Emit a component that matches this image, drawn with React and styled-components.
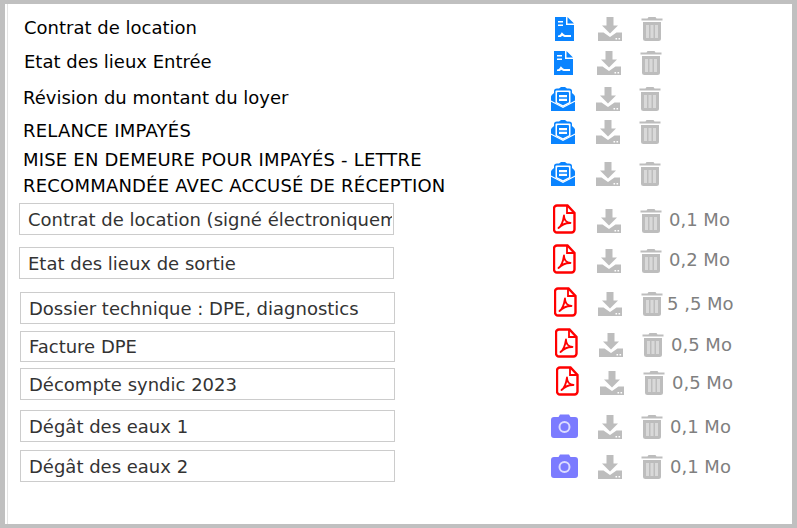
import React from 'react';
import styled, { createGlobalStyle } from 'styled-components';

const GlobalStyle = createGlobalStyle`
  html, body {
    margin: 0;
    padding: 0;
    background: #fff;
  }
`;

const Frame = styled.div`
  box-sizing: border-box;
  width: 797px;
  height: 528px;
  border: solid #c0c0c0;
  border-width: 4px 5px;
  background: #fff;
  box-shadow: inset 2px 0 0 #fff, inset 3px 0 0 #e4e4e4;
  overflow: hidden;
  font-family: "DejaVu Sans", Verdana, sans-serif;
  font-size: 18px;
`;

const List = styled.div`
  display: flex;
  flex-direction: column;
`;

const Row = styled.div`
  display: flex;
  align-items: flex-start;
  height: ${({ $h }) => $h}px;
  margin-top: ${({ $mt }) => $mt}px;
`;

const Title = styled.div`
  flex: 0 0 ${({ $w }) => $w}px;
  margin-left: ${({ $x }) => $x}px;
  margin-top: ${({ $y }) => $y || 0}px;
  color: #000;
  line-height: 26px;
  letter-spacing: ${({ $caps }) => ($caps ? '0.2px' : '0')};
`;

const NameInput = styled.input`
  box-sizing: border-box;
  flex: 0 0 375px;
  width: 375px;
  height: ${({ $h }) => $h || 32}px;
  margin: ${({ $y }) => $y}px 0 0 ${({ $x }) => $x}px;
  padding: 0 1px 0 8px;
  border: 1px solid #cccccc;
  border-radius: 0;
  outline: none;
  background: #fff;
  color: #333;
  font: inherit;
`;

const Slot = styled.span`
  display: block;
  flex: none;
  line-height: 0;
  margin-left: ${({ $x }) => $x}px;
  margin-top: ${({ $y }) => $y}px;
  filter: blur(0.3px);
`;

const Size = styled.span`
  flex: none;
  color: #808080;
  line-height: 20px;
  white-space: pre;
  margin-left: ${({ $x }) => $x}px;
  margin-top: ${({ $y }) => $y}px;
`;

const DocIcon = () => (
  <svg width="19" height="24" viewBox="0 0 19 24">
    <path d="M0 0h11v8h8v16H0z" fill="#0a84ff" />
    <path d="M12.500 0L19 6.500h-6.500z" fill="#0a84ff" />
    <path d="M3 4h5v1.600H3zM3 7.500h5v1.600H3z" fill="#fff" />
    <path d="M3 18.500c2.200 0 2.800-1.200 3.800-3.200l1.700 1.700 1.500.9h6V20H9.500L7 18.800 6 20H3z" fill="#fff" />
  </svg>
);

const MailIcon = () => (
  <svg width="24" height="24" viewBox="0 0 24 24">
    <path
      d="M0 9.500Q0 8 3 6V4Q3 1.500 6 1.500H8L10 0H14L16 1.500H18Q21 1.500 21 4V6Q24 8 24 9.500V24H0z"
      fill="#0a84ff"
    />
    <path d="M4.500 4.500Q4.500 3.500 5.500 3.500h13q1 0 1 1V16L12 20 4.500 16z" fill="#fff" />
    <path d="M6 6q0-1 1-1h10q1 0 1 1v9.200L12 18.300 6 15.200z" fill="#0a84ff" />
    <path d="M8 8h8v2.200H8zM8 11.800h8V14H8z" fill="#fff" />
    <path d="M0 13.500l12 6.300 12-6.300v1.300L12 21 0 14.800z" fill="#fff" />
  </svg>
);

const PdfIcon = () => (
  <svg width="23" height="30" viewBox="0 0 23 30">
    <path
      d="M4 1.500h10.500L21.500 9v16.500a3 3 0 0 1-3 3H4a3 3 0 0 1-3-3v-21a3 3 0 0 1 3-3z"
      fill="#fff"
      stroke="#ff0000"
      strokeWidth="2.400"
    />
    <path d="M14 1.500V9h7.500" fill="none" stroke="#ff0000" strokeWidth="1.800" />
    <path
      d="M5.500 24c2.500-1.500 4.500-6 5.500-12.500 0 4 2 7 6.500 7.500-4-.2-8 1-12 5z"
      fill="none"
      stroke="#ff0000"
      strokeWidth="1.800"
      strokeLinejoin="round"
    />
  </svg>
);

const CameraIcon = () => (
  <svg width="27" height="24" viewBox="0 0 27 24">
    <path
      d="M3 3h4.500L9 .5h9L19.500 3H24a3 3 0 0 1 3 3v15a3 3 0 0 1-3 3H3a3 3 0 0 1-3-3V6a3 3 0 0 1 3-3z"
      fill="#7b7bff"
    />
    <circle cx="13.500" cy="13" r="5" fill="none" stroke="#dcdcff" strokeWidth="2" />
  </svg>
);

const DownloadIcon = () => (
  <svg width="24" height="24" viewBox="0 0 24 24">
    <path d="M8.500 0h7v8.500H20l-8 8-8-8h4.500z" fill="#bdbdbd" />
    <path d="M0 15.500h5.500L12 20l6.500-4.500H24V24H0z" fill="#bdbdbd" />
    <path d="M17.500 21h1.600v1.500h-1.600zM20.500 21h1.600v1.500h-1.600z" fill="#fff" />
  </svg>
);

const TrashIcon = () => (
  <svg width="22" height="24" viewBox="0 0 22 24">
    <path d="M7.500 0h7l1 1.500H21.500V3.500H.5V1.500H6.500z" fill="#bdbdbd" />
    <path d="M2 5h18v16.500A2.500 2.500 0 0 1 17.500 24h-13A2.500 2.500 0 0 1 2 21.500z" fill="#bdbdbd" />
    <path d="M5 8h3v13H5zM9.500 8h3v13h-3zM14 8h3v13h-3z" fill="#d9d9d9" />
  </svg>
);

const plainRows = [
  { mt: 13, h: 24, x: 19, y: -2, w: 512, title: ['Contrat de location'], icon: DocIcon, ix: 19, dx: 24, dy: 0, tx: 19 },
  { mt: 10, h: 24, x: 19, y: -2, w: 511, title: ['Etat des lieux Entrée'], icon: DocIcon, ix: 19, dx: 24, dy: 0, tx: 19 },
  { mt: 12, h: 24, x: 18, y: -2, w: 510, title: ['Révision du montant du loyer'], icon: MailIcon, ix: 18, dx: 21, dy: 0, tx: 19 },
  { mt: 9, h: 24, x: 18, y: -2, w: 510, caps: true, title: ['RELANCE IMPAYÉS'], icon: MailIcon, ix: 18, dx: 21, dy: 0, tx: 19 },
  { mt: 0, h: 59, x: 18, y: 3, w: 510, caps: true, title: ['MISE EN DEMEURE POUR IMPAYÉS - LETTRE', 'RECOMMANDÉE AVEC ACCUSÉ DE RÉCEPTION'], icon: MailIcon, ix: 18, dx: 21, dy: 18, tx: 19 },
];

const fileRows = [
  { mt: 0, h: 32, x: 14, by: 0, name: 'Contrat de location (signé électroniquement)', icon: PdfIcon, ix: 159, iy: 1, dx: 21, dy: 6, tx: 19, size: '0,1 Mo', sx: 7, sy: 7 },
  { mt: 9, h: 35, x: 14, by: 3, name: 'Etat des lieux de sortie', icon: PdfIcon, ix: 159, iy: 0, dx: 21, dy: 5, tx: 19, size: '0,2 Mo', sx: 7, sy: 6 },
  { mt: 8, h: 37, x: 15, by: 5, name: 'Dossier technique : DPE, diagnostics', icon: PdfIcon, ix: 159, iy: 0, dx: 21, dy: 5, tx: 19, size: '5 ,5 Mo', sx: 4, sy: 7 },
  { mt: 4, h: 34, x: 15, by: 3, h2: 31, name: 'Facture DPE', icon: PdfIcon, ix: 160, iy: 0, dx: 21, dy: 5, tx: 19, size: '0,5 Mo', sx: 7, sy: 7 },
  { mt: 4, h: 34, x: 15, by: 2, name: 'Décompte syndic 2023', icon: PdfIcon, ix: 161, iy: 0, dx: 21, dy: 5, tx: 19, size: '0,5 Mo', sx: 7, sy: 7 },
  { mt: 10, h: 32, x: 15, by: 0, name: 'Dégât des eaux 1', icon: CameraIcon, ix: 156, iy: 4, dx: 20, dy: 5, tx: 19, size: '0,1 Mo', sx: 7, sy: 7 },
  { mt: 8, h: 32, x: 15, by: 0, name: 'Dégât des eaux 2', icon: CameraIcon, ix: 156, iy: 4, dx: 20, dy: 5, tx: 19, size: '0,1 Mo', sx: 7, sy: 7 },
];

export default function App() {
  return (
    <>
      <GlobalStyle />
      <Frame>
        <List>
          {plainRows.map((row) => (
            <Row key={row.title[0]} $mt={row.mt} $h={row.h}>
              <Title $x={row.x} $y={row.y} $w={row.w} $caps={row.caps}>
                {row.title.map((line) => (
                  <div key={line}>{line}</div>
                ))}
              </Title>
              <Slot $x={row.ix} $y={row.dy}><row.icon /></Slot>
              <Slot $x={row.dx} $y={row.dy}><DownloadIcon /></Slot>
              <Slot $x={row.tx} $y={row.dy}><TrashIcon /></Slot>
            </Row>
          ))}
          {fileRows.map((row) => (
            <Row key={row.name} $mt={row.mt} $h={row.h}>
              <NameInput readOnly value={row.name} $x={row.x} $y={row.by} $h={row.h2} />
              <Slot $x={row.ix} $y={row.iy}><row.icon /></Slot>
              <Slot $x={row.dx} $y={row.dy}><DownloadIcon /></Slot>
              <Slot $x={row.tx} $y={row.dy}><TrashIcon /></Slot>
              <Size $x={row.sx} $y={row.sy}>{row.size}</Size>
            </Row>
          ))}
        </List>
      </Frame>
    </>
  );
}
